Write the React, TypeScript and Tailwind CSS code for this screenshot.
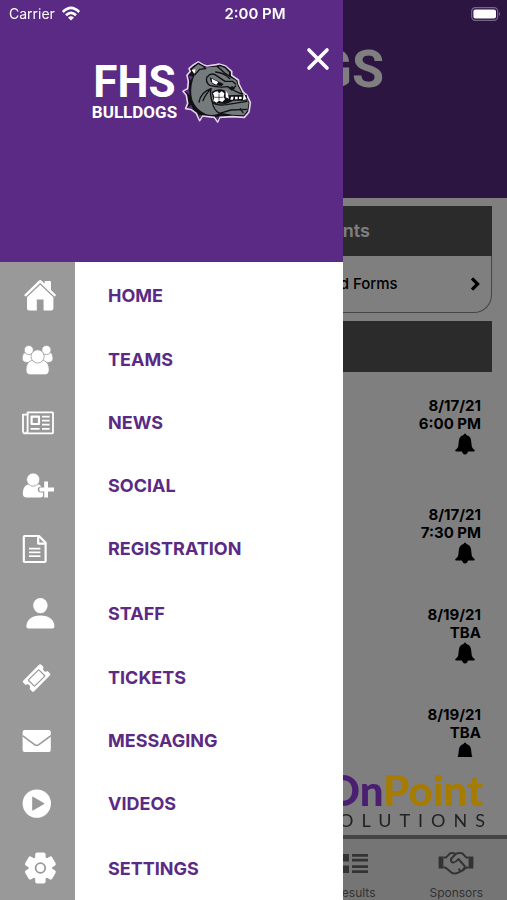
import type { ReactNode } from "react";
import { FaHome, FaUsers, FaCalendarAlt } from "react-icons/fa";

type MenuItem = { label: string; icon: ReactNode; tall?: boolean };
type Game = { date: string; time: string; tall?: boolean };

function HomeIcon() {
  return (
    <svg viewBox="0 0 36 36" className="size-9" fill="currentColor">
      <path d="M2.4 17.8 L17 3.6 Q18.2 2.6 19.4 3.6 L22.6 6.7 V5 Q22.6 4 23.6 4 H28 Q29 4 29 5 V13 L33.8 17.8 Q34.2 19.4 32.4 19.4 L18.2 6 L4 19.4 Q2 19.4 2.4 17.8Z" />
      <path d="M5 20.2 L18.2 7.8 L31.4 20.2 V31.6 Q31.4 33.4 29.6 33.4 H21.6 V22.6 H14.8 V33.4 H6.8 Q5 33.4 5 31.6Z" />
    </svg>
  );
}

function TeamsIcon() {
  return (
    <svg viewBox="0 0 32 32" className="size-8" fill="currentColor" stroke="#999999" strokeWidth=".8">
      <path d="M3 8.6 H10.6 Q12 13 11 18.4 H4.6 Q.2 18.4 .2 14 Q.2 10 3 8.6Z" />
      <path d="M28.2 8.6 H20.6 Q19.2 13 20.2 18.4 H26.6 Q31 18.4 31 14 Q31 10 28.2 8.6Z" />
      <circle cx="6.8" cy="6" r="4.6" />
      <circle cx="24.4" cy="6" r="4.6" />
      <path d="M9.6 16.4 H21.6 Q27.2 18.4 27.2 25.8 Q27.2 30.8 22.6 30.8 H8.6 Q4 30.8 4 25.8 Q4 18.4 9.6 16.4Z" />
      <circle cx="15.6" cy="12.4" r="6.6" />
    </svg>
  );
}

function NewsIcon() {
  return (
    <svg viewBox="0 0 32 32" className="size-8" fill="none" stroke="currentColor" strokeWidth="1.8" strokeLinejoin="round">
      <path d="M5.6 5.4 H30.6 Q31 5.4 31 6 V25.4 Q31 26.4 30 26.4 H3.4 Q1 26.4 1 24 V7.6 H5.6Z" />
      <path d="M5.6 7 V24 Q5.6 26 3.6 26" />
      <rect x="9.6" y="9.6" width="7.4" height="7.4" strokeWidth="2.2" />
      <path d="M20 9.6 H27.6 M20 13.6 H27.6 M20 17.6 H27.6 M8.6 21.8 H17.6 M20 21.8 H27.6" />
    </svg>
  );
}

function SocialIcon() {
  return (
    <svg viewBox="0 0 32 32" className="size-8" fill="currentColor">
      <path d="M5.6 14.4 H17 Q18.6 15.2 19.4 16.6 Q15.8 16.8 15.8 19.6 Q15.8 22.6 19 22.6 H21 V26.6 Q20 27.4 19 27.4 H4.8 Q.8 27.4 .8 23.4 Q.8 16.4 5.6 14.4Z" />
      <circle cx="11.2" cy="9.6" r="6.6" stroke="#999999" strokeWidth=".8" />
      <path d="M22.2 11.4 H26 V17.6 H32 V21.4 H26 V27.6 H22.2 V21.4 H17.8 Q16.6 19.5 17.8 17.6 H22.2Z" />
    </svg>
  );
}

function FormIcon() {
  return (
    <svg viewBox="0 0 32 32" className="size-8" fill="none" stroke="currentColor" strokeWidth="2.2" strokeLinejoin="round">
      <path d="M1.8 4 Q1.8 3 2.8 3 H17 L23.6 9.8 V28 Q23.6 29 22.6 29 H2.8 Q1.8 29 1.8 28Z" />
      <path d="M16.2 3.4 V10.6 H23.4" />
      <path d="M7 15.6 H18.4 M7 19.4 H18.4 M7 23.2 H18.4" strokeWidth="1.8" />
    </svg>
  );
}

function StaffIcon() {
  return (
    <svg viewBox="0 0 36 36" className="size-9" fill="currentColor">
      <ellipse cx="18.4" cy="10.6" rx="7.2" ry="7.6" />
      <path d="M4.4 31.4 Q5 21 18.4 20.6 Q31.8 21 32.4 31.4 Q32.4 33.4 30.4 33.4 H6.4 Q4.4 33.4 4.4 31.4Z" />
    </svg>
  );
}

function TicketIcon() {
  return (
    <svg viewBox="0 0 32 32" className="size-8">
      <g transform="rotate(-45 14.6 16)">
        <path
          d="M3.2 8.4 H26 Q27.2 8.4 27.2 9.6 V13.2 Q24.8 13.8 24.8 16 Q24.8 18.2 27.2 18.8 V22.4 Q27.2 23.6 26 23.6 H3.2 Q2 23.6 2 22.4 V18.8 Q4.4 18.2 4.4 16 Q4.4 13.8 2 13.2 V9.6 Q2 8.4 3.2 8.4Z"
          fill="currentColor"
        />
        <rect x="7.2" y="11.6" width="14.8" height="8.8" rx=".6" fill="none" stroke="#999999" strokeWidth="1.2" />
      </g>
    </svg>
  );
}

function MailIcon() {
  return (
    <svg viewBox="0 0 32 32" className="size-8">
      <rect x=".6" y="5" width="28.2" height="22" rx="2" fill="currentColor" />
      <path d="M.4 10.6 L12.6 19.6 Q14.7 21 16.8 19.6 L29 10.6" fill="none" stroke="#999999" strokeWidth="1.6" />
    </svg>
  );
}

function VideoIcon() {
  return (
    <svg viewBox="0 0 32 32" className="size-8">
      <circle cx="14.8" cy="15.6" r="14.2" fill="currentColor" />
      <path d="M10.2 9.2 Q10.2 8.4 11 8.8 L21.8 15 Q22.6 15.6 21.8 16.2 L11 22.4 Q10.2 22.8 10.2 22Z" fill="#999999" />
    </svg>
  );
}

function SettingsIcon() {
  return (
    <svg viewBox="0 0 36 36" className="size-9">
      <g fill="currentColor">
        <circle cx="18.4" cy="18" r="11.8" />
        <rect x="13.2" y="2.4" width="10.4" height="31.2" rx="2" />
        <rect x="13.2" y="2.4" width="10.4" height="31.2" rx="2" transform="rotate(60 18.4 18)" />
        <rect x="13.2" y="2.4" width="10.4" height="31.2" rx="2" transform="rotate(120 18.4 18)" />
      </g>
      <circle cx="18.4" cy="18" r="4.8" fill="none" stroke="#999999" strokeWidth="1.8" />
    </svg>
  );
}

function BellIcon() {
  return (
    <svg viewBox="0 0 20 22" className="mr-[6px] h-[22px] w-5" fill="currentColor">
      <path d="M10 .4 Q11.2 .4 11.4 2 Q15.4 3 16 7 L16.8 13.4 Q17.2 15.4 19.4 16.8 Q20.4 18.2 18.8 18.4 H1.2 Q-.4 18.2 .6 16.8 Q2.8 15.4 3.2 13.4 L4 7 Q4.6 3 8.6 2 Q8.8 .4 10 .4Z" />
      <path d="M7 18 H13 Q12.6 21.4 10 21.4 Q7.4 21.4 7 18Z" />
    </svg>
  );
}

function ResultsIcon() {
  return (
    <svg viewBox="0 0 28 22" className="h-[22px] w-7" fill="currentColor">
      <path d="M0 2 H8 V9.6 H0Z M0 13.6 H8 V21 H0Z" />
      <path d="M11 2 H27 V4.8 H11Z M11 6.8 H27 V9.6 H11Z M11 13.2 H27 V16 H11Z M11 18.2 H27 V21 H11Z" />
    </svg>
  );
}

function HandshakeIcon() {
  return (
    <svg viewBox="0 0 36 24" className="h-6 w-9" fill="none" stroke="currentColor" strokeWidth="2" strokeLinejoin="round">
      <path d="M.6 5.6 H5.4 V17.4 H.6Z M30.6 5.6 H35.4 V17.4 H30.6Z" fill="currentColor" stroke="none" />
      <path d="M5.4 6.6 H8 L12 2.4 Q14.4 1.2 17.6 3 Q21 1.2 24.4 2.4 L28.4 6.6 H30.6" />
      <path d="M5.4 16.4 H7.4 L13.4 21.6 Q16 23.4 19.6 21.8 L24.4 19.6 L28.4 16.4 H30.6" />
      <path d="M17.6 3 L13 8 Q12.6 11.4 15.4 11.6 Q17.8 11.4 20.4 8 L26.6 15 Q27.4 17.6 24.4 18.4 M20.6 17.6 L22.4 20" />
    </svg>
  );
}

function WifiIcon() {
  return (
    <svg viewBox="0 0 20 16" className="h-4 w-5" fill="none" stroke="currentColor" strokeWidth="2.6">
      <path d="M1.8 6 Q10 -2.2 18.2 6" />
      <path d="M5 9.2 Q10 4.4 15 9.2" />
      <path d="M10 14.6 L7 11.4 Q10 9 13 11.4Z" fill="currentColor" stroke="none" />
    </svg>
  );
}

function BatteryIcon() {
  return (
    <svg viewBox="0 0 30 14" className="h-[14px] w-[30px]">
      <rect x=".7" y=".7" width="26" height="12.6" rx="3.6" fill="none" stroke="#77658a" strokeWidth="1.2" />
      <rect x="2.4" y="2.4" width="22.6" height="9.2" rx="2" fill="#ffffff" />
      <path d="M28 4.8 Q30 7 28 9.2Z" fill="#77658a" />
    </svg>
  );
}

function BulldogLogo() {
  return (
    <svg viewBox="0 0 228 216" className="h-[72px] w-[76px]" strokeLinejoin="round" strokeLinecap="round">
      {/* collar and outline */}
      <path
        d="M34 46 L30 38 L44 26 L58 18 L72 26 L84 30 L112 26 L120 24 L140 30 L158 46 L158 58 L178 72 L180 84 L192 108 L204 118 L214 140 L210 168 L196 184 L160 182 L122 184 L116 198 L106 184 L70 180 L62 194 L52 172 L36 160 L20 158 L26 142 L22 118 L12 106 L26 98 L28 76 L24 58Z"
        fill="#111014"
        stroke="#e4d4ea"
        strokeWidth="5"
      />
      <path d="M28 58 L42 62 L34 74Z M16 106 L30 100 L32 116Z M24 156 L36 146 L42 158Z M56 176 L70 178 L62 190Z M108 182 L122 182 L116 194Z" fill="#5a2a84" />
      {/* head */}
      <path
        d="M50 50 Q64 34 86 34 L112 32 Q136 38 150 62 L172 74 L176 88 L188 112 L200 120 L209 140 L205 164 L194 178 L160 176 L124 170 Q104 182 80 174 Q50 160 40 132 Q32 104 42 70Z"
        fill="#757b7d"
      />
      <path d="M36 40 L58 22 L72 30 L80 38 L62 40 L48 56Z" fill="#757b7d" stroke="#111014" strokeWidth="4" />
      <path d="M38 42 L50 40 L46 54Z" fill="#ffffff" />
      <path d="M116 32 L122 28 L138 34 L152 48 L152 60 L138 52Z" fill="#757b7d" stroke="#111014" strokeWidth="4" />
      <g fill="none" stroke="#111014" strokeWidth="4">
        <path d="M86 62 Q94 50 108 56 L138 76 L160 76 L170 84" />
        <path d="M84 62 Q78 78 92 88 Q120 96 146 92" />
        <path d="M110 48 Q136 50 152 68" />
        <path d="M60 138 Q66 108 96 98 Q78 116 72 134" />
        <path d="M96 98 Q92 118 100 138 Q112 150 142 146 L204 136" />
        <path d="M100 138 Q104 164 122 172 L156 162 L204 160" />
        <path d="M146 92 L160 100 L170 90 M162 102 L178 110 L190 114" />
        <path d="M184 158 L192 170" />
      </g>
      <path d="M92 64 L134 84 L128 90 L108 88 Q94 82 92 64Z" fill="#111014" />
      <path d="M98 68 L118 78 L112 86 L100 80Z" fill="#ffffff" />
      {/* mouth */}
      <path d="M98 108 Q118 94 138 104 L148 118 L190 116 L204 118 L204 134 L164 134 L140 144 L106 142Z" fill="#111014" />
      <path
        d="M102 112 Q108 106 116 106 L120 112 L128 106 L136 112 L134 122 L138 130 L130 138 L120 134 L112 140 L104 134 L106 122Z M140 104 L146 112 L150 128 L140 124Z M156 122 L164 122 L162 131 L154 131Z M168 122 L176 122 L176 130 L168 130Z M180 122 L188 122 L188 129 L180 129Z M194 112 L203 130 L192 132Z"
        fill="#ffffff"
      />
      <path d="M108 124 H132 M120 114 V132" stroke="#111014" strokeWidth="2" fill="none" />
      <path d="M148 96 L160 90 L168 98 L158 104Z" fill="#111014" />
    </svg>
  );
}

const menu: MenuItem[] = [
  { label: "HOME", icon: <HomeIcon />, tall: true },
  { label: "TEAMS", icon: <TeamsIcon /> },
  { label: "NEWS", icon: <NewsIcon /> },
  { label: "SOCIAL", icon: <SocialIcon /> },
  { label: "REGISTRATION", icon: <FormIcon /> },
  { label: "STAFF", icon: <StaffIcon />, tall: true },
  { label: "TICKETS", icon: <TicketIcon /> },
  { label: "MESSAGING", icon: <MailIcon /> },
  { label: "VIDEOS", icon: <VideoIcon /> },
  { label: "SETTINGS", icon: <SettingsIcon />, tall: true },
];

const games: Game[] = [
  { date: "8/17/21", time: "6:00 PM", tall: true },
  { date: "8/17/21", time: "7:30 PM" },
  { date: "8/19/21", time: "TBA" },
  { date: "8/19/21", time: "TBA" },
];

const tabs = [
  { label: "Home", icon: <FaHome className="size-7" /> },
  { label: "Teams", icon: <FaUsers className="size-7" /> },
  { label: "Schedule", icon: <FaCalendarAlt className="size-6" /> },
  { label: "Results", icon: <ResultsIcon /> },
  { label: "Sponsors", icon: <HandshakeIcon /> },
];

function StatusBar() {
  return (
    <div className="fixed inset-x-0 top-0 z-30 grid h-7 grid-cols-3 items-center pr-[6px] pl-[9px] text-[15px] text-white">
      <div className="flex items-center gap-[6px]">
        <span className="text-sm">Carrier</span>
        <WifiIcon />
      </div>
      <span className="text-center font-semibold">2:00 PM</span>
      <div className="flex justify-end">
        <BatteryIcon />
      </div>
    </div>
  );
}

function HomeScreen() {
  return (
    <main className="flex h-screen flex-col bg-white text-black">
      <header className="flex h-[198px] shrink-0 justify-center bg-[#5a2a84] pt-10">
        <h1 className="font-['Roboto',sans-serif] text-[52px] leading-[60px] font-bold text-white">BULLDOGS</h1>
      </header>

      <section className="mx-[15px] mt-2 shrink-0">
        <h2 className="flex h-[50px] items-center justify-center bg-[#565656] text-lg font-semibold text-white">
          Important Announcements
        </h2>
        <a href="#forms" className="flex h-[57px] items-center rounded-b-[18px] border border-t-0 border-[#8c8c8c] px-[10px] text-[15px] font-medium">
          <span className="w-3" />
          <span className="flex-1 text-center">Athletic Handbook, Physicals and Forms</span>
          <svg viewBox="0 0 12 14" className="h-[14px] w-3" fill="none" stroke="currentColor" strokeWidth="3.2">
            <path d="M3 1.4 L8.6 7 L3 12.6" />
          </svg>
        </a>
      </section>

      <section className="mt-2 flex min-h-0 flex-1 flex-col">
        <div className="mx-[15px] h-[51px] shrink-0 bg-[#565656]" />
        <ul className="min-h-0 flex-1 overflow-hidden pt-[25px] pr-[26px]">
          {games.map((game, i) => (
            <li
              key={i}
              className={
                game.tall
                  ? "flex h-[109px] flex-col items-end text-[15px] leading-[18px] font-bold"
                  : "flex h-[100px] flex-col items-end text-[15px] leading-[18px] font-bold"
              }
            >
              <span>{game.date}</span>
              <span>{game.time}</span>
              <BellIcon />
            </li>
          ))}
        </ul>
      </section>

      {/* sponsor logo stays above the scrim */}
      <div className="relative z-[15] flex h-[78px] shrink-0 flex-col items-end pt-[10px] pr-[14px] font-['Lato',sans-serif]">
        <div className="pr-[10px] text-[42px] leading-[46px] font-black text-[#a67c00]">
          <span className="text-[#4a1f72]">On</span>Point
        </div>
        <div className="text-lg leading-[14px] tracking-[8px] text-[#222222]">SOLUTIONS</div>
      </div>

      <nav className="grid h-[65px] shrink-0 grid-cols-5 border-t-4 border-[#8a8a8a] bg-[#ebebeb]">
        {tabs.map((tab) => (
          <a key={tab.label} href="#tab" className="flex flex-col items-center text-xs text-[#666666]">
            <span className="flex h-[47px] items-center">{tab.icon}</span>
            <span className="leading-[14px]">{tab.label}</span>
          </a>
        ))}
      </nav>
    </main>
  );
}

function Drawer() {
  return (
    <aside className="fixed inset-y-0 left-0 z-20 flex w-[343px] flex-col overflow-hidden bg-white">
      <div className="relative flex h-[262px] shrink-0 items-start justify-center bg-[#5a2a84] pt-14">
        <div className="flex items-start gap-[2px] pl-1">
          <div className="flex flex-col items-center pt-1 font-['Roboto',sans-serif] font-bold text-white">
            <span className="text-[44px] leading-[44px]">FHS</span>
            <span className="text-[17px] leading-4">BULLDOGS</span>
          </div>
          <BulldogLogo />
        </div>
        <button type="button" aria-label="Close menu" className="absolute top-[46px] right-3 text-white">
          <svg viewBox="0 0 26 26" className="size-[26px]" fill="none" stroke="currentColor" strokeWidth="3.6" strokeLinecap="round">
            <path d="M4 4 L22 22 M22 4 L4 22" />
          </svg>
        </button>
      </div>
      <nav className="flex flex-1 flex-col bg-white">
        {menu.map((item) => (
          <a
            key={item.label}
            href="#menu"
            className={item.tall ? "flex h-[66px] shrink-0 items-center" : "flex h-[63px] shrink-0 items-center"}
          >
            <span className="flex w-[75px] items-center self-stretch bg-[#999999] pl-[22px] text-white">{item.icon}</span>
            <span className="pl-[33px] text-[18px] font-bold text-[#5a2a84]">{item.label}</span>
          </a>
        ))}
      </nav>
    </aside>
  );
}

export default function App() {
  return (
    <div className="overflow-hidden font-['Inter',sans-serif]">
      <HomeScreen />
      <div className="fixed inset-0 z-10 bg-black/50" />
      <Drawer />
      <StatusBar />
    </div>
  );
}
